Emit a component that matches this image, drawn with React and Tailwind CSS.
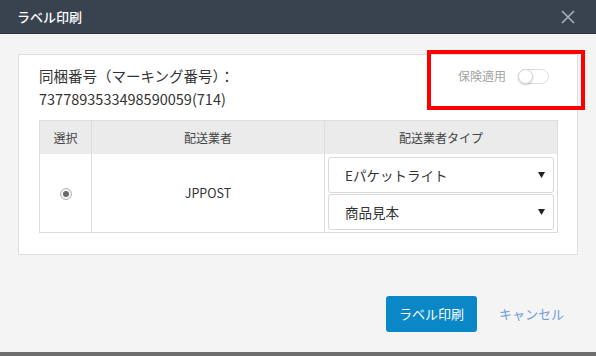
export default function App() {
  const font = { fontFamily: '"Noto Sans CJK JP", "Noto Sans", sans-serif' };
  const Caret = () => (
    <svg width="7" height="6" viewBox="0 0 7 6">
      <path d="M0 0 H7 L3.5 6 Z" fill="#222" />
    </svg>
  );
  return (
    <div className="relative w-[596px] h-[356px] flex flex-col overflow-hidden" style={font}>
      <div className="h-[34px] shrink-0 bg-[#38434f] border-b border-[#2b333c] flex items-center justify-between pl-[17px] pr-[20px]">
        <span className="text-white text-[13px] font-medium leading-none">ラベル印刷</span>
        <svg width="14" height="14" viewBox="0 0 14 14" className="mr-[1px]">
          <path d="M1 1 L13 13 M13 1 L1 13" stroke="#a9b0b7" strokeWidth="1.6" />
        </svg>
      </div>
      <div className="flex-1 bg-[#f4f4f4] flex flex-col pt-[20px] px-[18px]">
        <div className="h-[201px] bg-white border border-[#dedede] pt-[9px] pl-[20px] pr-[19px]">
          <div className="flex justify-between">
            <div className="text-[14.5px] leading-[23px] text-[#333]">
              <div>同梱番号（マーキング番号）：</div>
              <div>7377893533498590059(714)</div>
            </div>
            <div className="flex items-start pt-[4px] pr-[9px] gap-[12px]">
              <span className="text-[12px] leading-[16px] text-[#a3a3a3]">保険適用</span>
              <div className="w-[31px] h-[15px] mt-[1px] rounded-full border border-[#dcdcdc] bg-white relative">
                <div className="absolute left-[-1px] top-[-1px] w-[15px] h-[15px] rounded-full bg-white border border-[#d6d6d6] shadow-[0_1px_2px_rgba(0,0,0,0.2)]"></div>
              </div>
            </div>
          </div>
          <div className="mt-[10px] border border-[#dddddd] text-[12px] text-[#444]">
            <div className="flex h-[33px] bg-[#ebebeb] items-center">
              <div className="w-[52px] h-full flex items-center justify-center border-r border-[#dddddd]">選択</div>
              <div className="w-[233px] h-full flex items-center justify-center border-r border-[#dddddd]">配送業者</div>
              <div className="flex-1 h-full flex items-center justify-center">配送業者タイプ</div>
            </div>
            <div className="flex h-[78px]">
              <div className="w-[52px] h-full flex items-center justify-center border-r border-[#dddddd]">
                <div className="w-[12px] h-[12px] rounded-full border border-[#b5b5b5] bg-[#f3f3f3] flex items-center justify-center mt-[1px]">
                  <div className="w-[6px] h-[6px] rounded-full bg-[#6b6b6b]"></div>
                </div>
              </div>
              <div className="w-[233px] h-full flex items-center justify-center border-r border-[#dddddd] text-[12.5px] text-[#333]">JPPOST</div>
              <div className="flex-1 flex flex-col gap-[1px] pt-[3px] px-[3px]">
                <div className="h-[36px] border border-[#d8d8d8] rounded-[3px] flex items-center justify-between pl-[16px] pr-[8px] text-[13.5px] text-[#333]">
                  <span>Eパケットライト</span>
                  <Caret />
                </div>
                <div className="h-[36px] border border-[#d8d8d8] rounded-[3px] flex items-center justify-between pl-[16px] pr-[8px] text-[13.5px] text-[#333]">
                  <span>商品見本</span>
                  <Caret />
                </div>
              </div>
            </div>
          </div>
        </div>
        <div className="flex justify-end items-center mt-[41px] pr-[14px] gap-[22px]">
          <button className="w-[91px] h-[36px] rounded-[3px] bg-[#0a87c6] text-white text-[13px]">ラベル印刷</button>
          <span className="text-[13px] text-[#6d9fd6]">キャンセル</span>
        </div>
      </div>
      <div className="h-[4px] shrink-0 bg-[#6e6e6e]"></div>
      <div className="absolute left-[427px] top-[50px] w-[158px] h-[60px] border-[4px] border-[#ff0000]"></div>
    </div>
  );
}
